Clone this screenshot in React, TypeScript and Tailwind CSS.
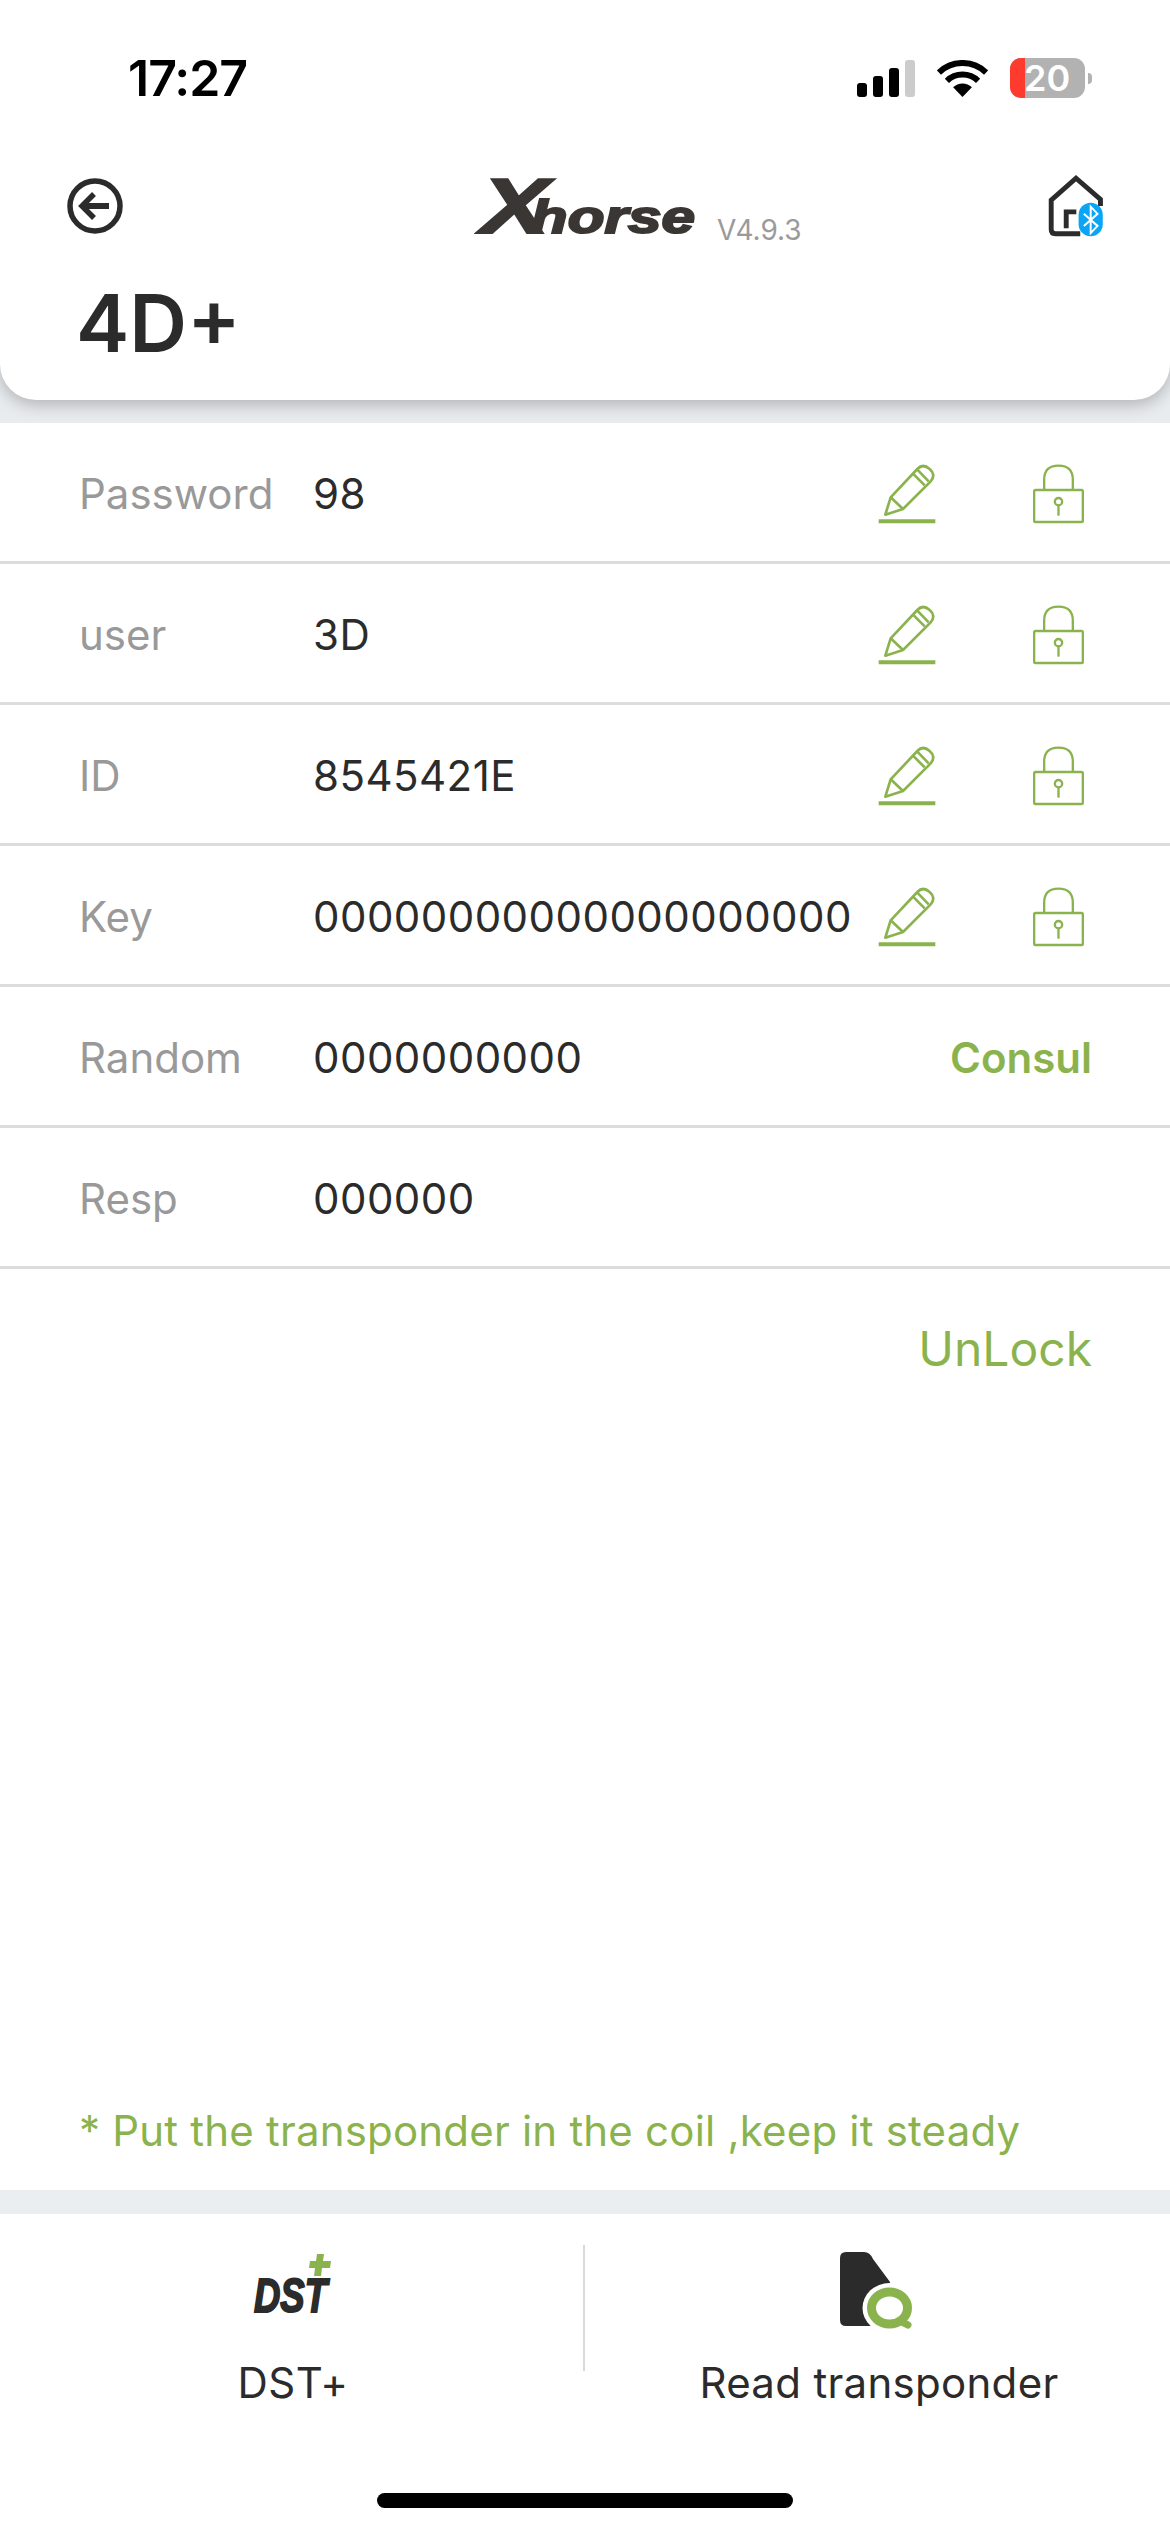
import React from 'react'

const GREEN = '#8bb34d'

// Row data for the parameter table
const rows = [
  { label: 'Password', value: '98', editable: true },
  { label: 'user', value: '3D', editable: true },
  { label: 'ID', value: '8545421E', editable: true },
  { label: 'Key', value: '00000000000000000000', editable: true },
  { label: 'Random', value: '0000000000', consult: true },
  { label: 'Resp', value: '000000' },
]

function SignalIcon() {
  return (
    <svg width="58" height="37" viewBox="0 0 58 37">
      <rect x="0" y="23" width="10" height="14" rx="3" fill="#000" />
      <rect x="16" y="16" width="10" height="21" rx="3" fill="#000" />
      <rect x="32" y="8" width="10" height="29" rx="3" fill="#000" />
      <rect x="48" y="0" width="10" height="37" rx="3" fill="#ccc" />
    </svg>
  )
}

function WifiIcon() {
  return (
    <svg width="51" height="37" viewBox="0 0 51 37">
      <path d="M1.9 12.5A34 34 0 0 1 49.1 12.5" fill="none" stroke="#000" strokeWidth="6" />
      <path d="M9.9 20.8A22.5 22.5 0 0 1 41.1 20.8" fill="none" stroke="#000" strokeWidth="6" />
      <path d="M25.5 37L16.1 27.3A13.5 13.5 0 0 1 34.9 27.3Z" fill="#000" />
    </svg>
  )
}

function Battery() {
  return (
    <div className="flex items-center">
      <div className="w-[75px] h-[40px] rounded-[11px] bg-[#b2b2b2] flex items-center">
        <div className="w-[15px] h-full rounded-l-[11px] bg-[#ff3b30]" />
        <span className="ml-[-1px] text-white text-[36px] font-semibold leading-none">20</span>
      </div>
      <div className="w-[4px] h-[11px] ml-[3px] rounded-r-full bg-[#b2b2b2]" />
    </div>
  )
}

function BackIcon() {
  return (
    <svg width="56" height="56" viewBox="0 0 56 56" fill="none" stroke="#2b2b2b" strokeWidth="5.5">
      <circle cx="28" cy="28" r="25" />
      <path d="M42 28H15" strokeWidth="6" />
      <path d="M27 16L15 28L27 40" strokeWidth="5.5" />
    </svg>
  )
}

function HomeBluetoothIcon() {
  return (
    <svg width="56" height="62" viewBox="740 405 170 190" fill="none">
      <path d="M838 585H762Q749 585 749 572V482L825 415L900 480V500" stroke="#2b2b2b" strokeWidth="15" />
      <path d="M795 568V518H826" stroke="#2b2b2b" strokeWidth="15" />
      <rect x="833" y="490" width="74" height="103" rx="37" fill="#0aa5f5" />
      <path d="M849 524L891 561L870 583V502L891 524L849 561" stroke="#fff" strokeWidth="6" />
    </svg>
  )
}

function PencilIcon() {
  return (
    <svg width="58" height="60" viewBox="110 103 174 180" fill="none" stroke={GREEN} strokeWidth="8">
      <path d="M132 255L148 203L228 118Q245 100 265 118Q285 135 268 155L185 238Z" strokeLinejoin="round" />
      <path d="M148 203L185 238" />
      <path d="M215 132L250 167" />
      <path d="M228 120L262 155" />
      <path d="M112 275H282" strokeWidth="12" />
    </svg>
  )
}

function LockIcon() {
  return (
    <svg width="53" height="60" viewBox="570 103 158 180" fill="none" stroke={GREEN} strokeWidth="7">
      <rect x="576" y="181" width="146" height="96" rx="4" />
      <path d="M606 181V150Q606 108 649 108Q692 108 692 150V181" />
      <circle cx="649" cy="216" r="11" />
      <path d="M649 227V255" strokeLinecap="round" />
    </svg>
  )
}

function Logo() {
  return (
    <div className="w-[217px] h-[56px] shrink-0">
      <div className="flex items-baseline origin-left scale-x-[1.31] font-['Liberation_Sans',sans-serif] font-bold italic text-[#3a3634] [-webkit-text-stroke:2px_#3a3634] leading-none h-[56px]">
        <span className="text-[78px] leading-[56px] tracking-[-2px]">X</span>
        <span className="text-[46px] leading-[56px] ml-[-12px]">horse</span>
      </div>
    </div>
  )
}

function DstIcon() {
  return (
    <div className="relative w-[77px] h-[60px]">
      <span className="absolute left-0 top-[20px] origin-left scale-x-[.76] font-['Liberation_Sans',sans-serif] font-bold italic text-[48px] leading-[44px] text-[#2b2b2b] [-webkit-text-stroke:2px_#2b2b2b]">
        DST
      </span>
      <svg className="absolute right-0 top-0" width="22" height="22" viewBox="0 0 22 22">
        <path d="M8 0H15L14 7H22L21 14H13L12 22H5L6 14H0L1 7H7Z" fill={GREEN} />
      </svg>
    </div>
  )
}

function ReadIcon() {
  return (
    <svg width="72" height="78" viewBox="0 0 72 78" fill="none">
      <path d="M6 1H24Q30 1 33 8L50 31V75H6Q0 75 0 69V7Q0 1 6 1Z" fill="#2b2b2b" />
      <ellipse cx="49.5" cy="57" rx="27" ry="25" fill="#fff" />
      <ellipse cx="49.5" cy="57" rx="18" ry="16" stroke={GREEN} strokeWidth="9" />
      <path d="M60 70L68 74" stroke={GREEN} strokeWidth="7" strokeLinecap="round" />
    </svg>
  )
}

export default function App() {
  return (
    <div className="w-[1170px] h-[2532px] overflow-hidden flex flex-col bg-white font-['Inter',sans-serif] text-[#2b2b2b]">
      {/* Header card with status bar */}
      <div className="h-[423px] shrink-0 bg-[#e9ecef] overflow-hidden">
        <header className="h-[400px] bg-white rounded-b-[36px] shadow-[0_5px_16px_rgba(0,0,0,0.24)] flex flex-col">
          <div className="flex items-center h-[60px] mt-[48px] pl-[128px]">
            <span className="text-[50px] font-semibold text-black leading-none tracking-[-1px]">17:27</span>
            <div className="ml-auto flex items-center pr-[78px]">
              <SignalIcon />
              <div className="ml-[22px] mr-[22px]">
                <WifiIcon />
              </div>
              <Battery />
            </div>
          </div>
          <div className="flex items-center mt-[67px] pl-[67px] pr-[66px] h-[62px]">
            <BackIcon />
            <div className="ml-[358px] flex items-end">
              <Logo />
              <span className="ml-[19px] text-[28px] leading-none text-[#9a9a9a] mb-[-10px]">V4.9.3</span>
            </div>
            <div className="ml-auto">
              <HomeBluetoothIcon />
            </div>
          </div>
          <h1 className="mt-[46px] pl-[76px] text-[80px] font-semibold leading-none">4D+</h1>
        </header>
      </div>

      {/* Parameter rows */}
      <div className="flex flex-col">
        {rows.map((row) => (
          <div key={row.label} className="h-[141px] pt-[3px] flex items-center border-b-[3px] border-[#dcdcdc] pl-[79px]">
            <span className="w-[234px] text-[42px] text-[#999]">{row.label}</span>
            <span className="text-[42px] tracking-[0.45px]">{row.value}</span>
            {row.editable && (
              <div className="ml-auto flex items-center pr-[85px] gap-[96px]">
                <PencilIcon />
                <LockIcon />
              </div>
            )}
            {row.consult && (
              <span className="ml-auto pr-[78px] text-[42px] font-semibold text-[#8bb34d]">Consul</span>
            )}
          </div>
        ))}
      </div>

      <div className="flex justify-end pr-[78px] mt-[56px]">
        <span className="text-[48px] leading-none text-[#8bb34d]">UnLock</span>
      </div>

      {/* Hint and bottom actions */}
      <p className="mt-auto pl-[79px] pb-[31px] text-[42px] tracking-[0.2px] text-[#8bb34d] leading-[56px]">
        * Put the transponder in the coil ,keep it steady
      </p>
      <div className="h-[24px] bg-[#ebeef1] shrink-0" />
      <div className="h-[318px] shrink-0 flex flex-col">
        <div className="flex pt-[31px]">
          <div className="w-[583px] h-[126px] flex flex-col items-center">
            <div className="mt-[9px] ml-[2px]">
              <DstIcon />
            </div>
            <span className="mt-[48px] ml-[3px] text-[42px] leading-none tracking-[0.5px]">DST+</span>
          </div>
          <div className="w-[2px] h-[126px] bg-[#d9d9d9]" />
          <div className="flex-1 flex flex-col items-center">
            <div className="mt-[6px] ml-[-4px]">
              <ReadIcon />
            </div>
            <span className="mt-[33px] ml-[3px] text-[42px] leading-none tracking-[0.3px]">Read transponder</span>
          </div>
        </div>
        <div className="mt-auto mb-[24px] self-center w-[416px] h-[15px] rounded-full bg-black" />
      </div>
    </div>
  )
}
